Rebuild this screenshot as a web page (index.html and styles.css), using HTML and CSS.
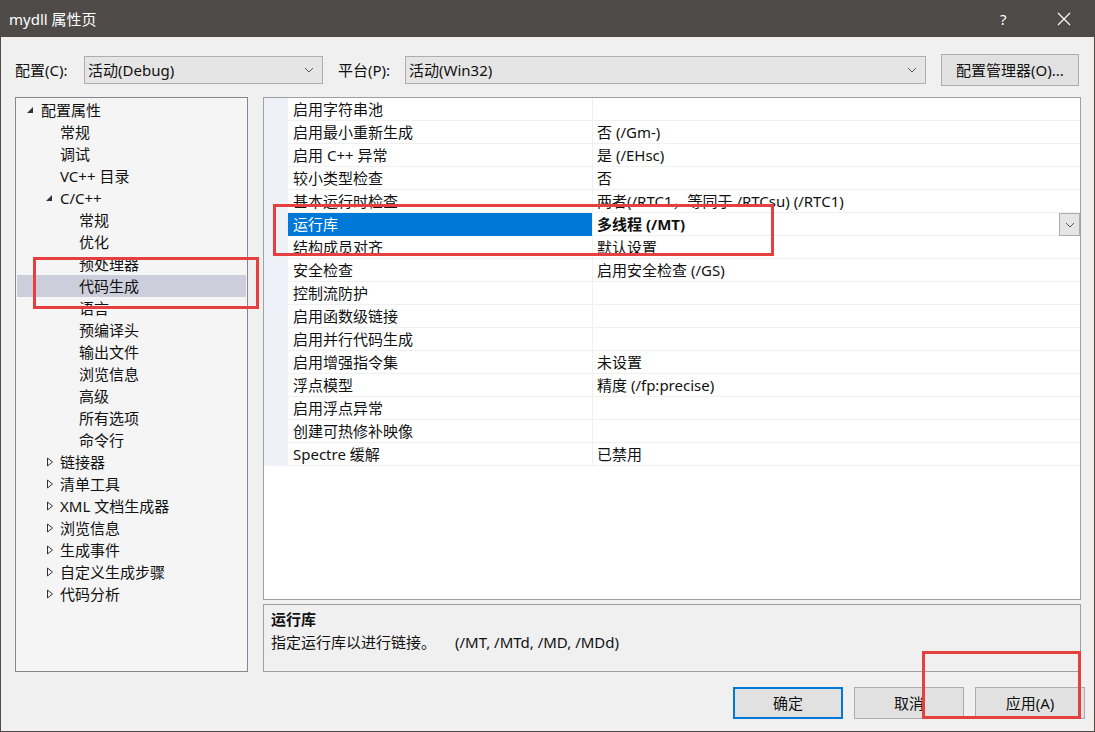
FILE: index.html
```html
<!DOCTYPE html>
<html>
<head>
<meta charset="utf-8">
<link rel="stylesheet" href="styles.css">
</head>
<body>
<div class="window">
  <div class="titlebar">
    <span class="title">mydll 属性页</span>
    <span class="help">?</span>
    <span class="close"><svg width="14" height="14" viewBox="0 0 14 14"><path d="M1 1L13 13M13 1L1 13" stroke="#fff" stroke-width="1.2" fill="none"/></svg></span>
  </div>
  <div class="body">
    <div class="toprow">
      <span class="lbl l1">配置(C):</span>
      <div class="combo c1"><span>活动(Debug)</span><svg class="chev" width="10" height="6" viewBox="0 0 10 6"><path d="M1 1L5 5L9 1" stroke="#555" stroke-width="1" fill="none"/></svg></div>
      <span class="lbl l2">平台(P):</span>
      <div class="combo c2"><span>活动(Win32)</span><svg class="chev" width="10" height="6" viewBox="0 0 10 6"><path d="M1 1L5 5L9 1" stroke="#555" stroke-width="1" fill="none"/></svg></div>
      <div class="btn mgr">配置管理器(O)...</div>
    </div>
    <div class="main">
      <div class="tree">
        <div class="node lv0"><svg class="tri" width="8" height="8" viewBox="0 0 8 8"><path d="M7 1L7 7L1 7Z" fill="#333"/></svg>配置属性</div>
        <div class="node lv1">常规</div>
        <div class="node lv1">调试</div>
        <div class="node lv1">VC++ 目录</div>
        <div class="node lv1 exp"><svg class="tri" width="8" height="8" viewBox="0 0 8 8"><path d="M7 1L7 7L1 7Z" fill="#333"/></svg>C/C++</div>
        <div class="node lv2">常规</div>
        <div class="node lv2">优化</div>
        <div class="node lv2">预处理器</div>
        <div class="node lv2 sel">代码生成</div>
        <div class="node lv2">语言</div>
        <div class="node lv2">预编译头</div>
        <div class="node lv2">输出文件</div>
        <div class="node lv2">浏览信息</div>
        <div class="node lv2">高级</div>
        <div class="node lv2">所有选项</div>
        <div class="node lv2">命令行</div>
        <div class="node lv1 col"><svg class="tri" width="8" height="10" viewBox="0 0 8 10"><path d="M1.5 1L6.5 5L1.5 9Z" stroke="#333" stroke-width="1" fill="none"/></svg>链接器</div>
        <div class="node lv1 col"><svg class="tri" width="8" height="10" viewBox="0 0 8 10"><path d="M1.5 1L6.5 5L1.5 9Z" stroke="#333" stroke-width="1" fill="none"/></svg>清单工具</div>
        <div class="node lv1 col"><svg class="tri" width="8" height="10" viewBox="0 0 8 10"><path d="M1.5 1L6.5 5L1.5 9Z" stroke="#333" stroke-width="1" fill="none"/></svg>XML 文档生成器</div>
        <div class="node lv1 col"><svg class="tri" width="8" height="10" viewBox="0 0 8 10"><path d="M1.5 1L6.5 5L1.5 9Z" stroke="#333" stroke-width="1" fill="none"/></svg>浏览信息</div>
        <div class="node lv1 col"><svg class="tri" width="8" height="10" viewBox="0 0 8 10"><path d="M1.5 1L6.5 5L1.5 9Z" stroke="#333" stroke-width="1" fill="none"/></svg>生成事件</div>
        <div class="node lv1 col"><svg class="tri" width="8" height="10" viewBox="0 0 8 10"><path d="M1.5 1L6.5 5L1.5 9Z" stroke="#333" stroke-width="1" fill="none"/></svg>自定义生成步骤</div>
        <div class="node lv1 col"><svg class="tri" width="8" height="10" viewBox="0 0 8 10"><path d="M1.5 1L6.5 5L1.5 9Z" stroke="#333" stroke-width="1" fill="none"/></svg>代码分析</div>
      </div>
      <div class="right">
        <div class="grid">
          <div class="row"><div class="strip"></div><div class="name">启用字符串池</div><div class="val"></div></div>
          <div class="row"><div class="strip"></div><div class="name">启用最小重新生成</div><div class="val">否 (/Gm-)</div></div>
          <div class="row"><div class="strip"></div><div class="name">启用 C++ 异常</div><div class="val">是 (/EHsc)</div></div>
          <div class="row"><div class="strip"></div><div class="name">较小类型检查</div><div class="val">否</div></div>
          <div class="row"><div class="strip"></div><div class="name">基本运行时检查</div><div class="val">两者(/RTC1，等同于 /RTCsu) (/RTC1)</div></div>
          <div class="row selrow"><div class="strip"></div><div class="name">运行库</div><div class="val"><b>多线程 (/MT)</b><div class="dd"><svg width="10" height="6" viewBox="0 0 10 6"><path d="M1 1L5 5L9 1" stroke="#555" stroke-width="1" fill="none"/></svg></div></div></div>
          <div class="row"><div class="strip"></div><div class="name">结构成员对齐</div><div class="val">默认设置</div></div>
          <div class="row"><div class="strip"></div><div class="name">安全检查</div><div class="val">启用安全检查 (/GS)</div></div>
          <div class="row"><div class="strip"></div><div class="name">控制流防护</div><div class="val"></div></div>
          <div class="row"><div class="strip"></div><div class="name">启用函数级链接</div><div class="val"></div></div>
          <div class="row"><div class="strip"></div><div class="name">启用并行代码生成</div><div class="val"></div></div>
          <div class="row"><div class="strip"></div><div class="name">启用增强指令集</div><div class="val">未设置</div></div>
          <div class="row"><div class="strip"></div><div class="name">浮点模型</div><div class="val">精度 (/fp:precise)</div></div>
          <div class="row"><div class="strip"></div><div class="name">启用浮点异常</div><div class="val"></div></div>
          <div class="row"><div class="strip"></div><div class="name">创建可热修补映像</div><div class="val"></div></div>
          <div class="row"><div class="strip"></div><div class="name">Spectre 缓解</div><div class="val">已禁用</div></div>
        </div>
        <div class="desc">
          <div class="dtitle">运行库</div>
          <div class="dtext">指定运行库以进行链接。<span class="opts">(/MT, /MTd, /MD, /MDd)</span></div>
        </div>
      </div>
    </div>
    <div class="buttons">
      <div class="btn ok">确定</div>
      <div class="btn">取消</div>
      <div class="btn">应用(A)</div>
    </div>
  </div>
  <div class="anno a1"></div>
  <div class="anno a2"></div>
  <div class="anno a3"></div>
</div>
</body>
</html>
```
FILE: styles.css
```css
* { box-sizing: border-box; }
html, body { margin: 0; padding: 0; }
body {
  width: 1095px;
  height: 732px;
  overflow: hidden;
  font-family: "Noto Sans", "Noto Sans CJK SC", sans-serif;
  font-size: 15px;
  color: #111;
  background: #f0f0f0;
}
.window {
  position: relative;
  width: 1095px;
  height: 732px;
  background: #f0f0f0;
  border: 1px solid #4d4a48;
  border-top: none;
  display: flex;
  flex-direction: column;
}
.titlebar {
  height: 37px;
  background: #4d4a48;
  color: #fff;
  display: flex;
  align-items: center;
  padding-left: 9px;
  margin: 0 -1px;
  flex-shrink: 0;
}
.title { font-size: 15px; line-height: 20px; flex: 1; }
.help { font-size: 15px; width: 14px; margin-right: 43px; line-height: 20px; }
.close { width: 14px; height: 14px; margin-right: 24px; display: flex; }
.body {
  padding-left: 14px;
  display: flex;
  flex-direction: column;
  flex: 1;
}
.toprow {
  margin-top: 17px;
  height: 32px;
  display: flex;
  align-items: center;
}
.lbl { line-height: 20px; }
.l1 { width: 69px; }
.l2 { width: 67px; margin-left: 15px; }
.combo {
  height: 28px;
  background: #e5e5e5;
  border: 1px solid #adadad;
  display: flex;
  align-items: center;
  justify-content: space-between;
  padding: 0 8px 0 3px;
  line-height: 20px;
}
.c1 { width: 239px; }
.c2 { width: 521px; }
.btn {
  height: 32px;
  background: #e1e1e1;
  border: 1px solid #adadad;
  display: flex;
  align-items: center;
  justify-content: center;
  line-height: 20px;
}
.mgr { width: 138px; margin-left: 15px; }
.main {
  margin-top: 11px;
  height: 575px;
  display: flex;
  gap: 15px;
}
.tree {
  width: 233px;
  height: 575px;
  border: 1px solid #828790;
  background: #f5f5f5;
  padding: 1px 1px 0 1px;
}
.node {
  height: 22px;
  display: flex;
  align-items: center;
  position: relative;
  line-height: 20px;
  white-space: nowrap;
}
.lv0 { padding-left: 24px; }
.lv1 { padding-left: 43px; }
.lv2 { padding-left: 62px; }
.tri { position: absolute; }
.lv0 .tri { left: 9px; top: 7px; }
.lv1.exp .tri { left: 28px; top: 7px; }
.lv1.col .tri { left: 29px; top: 6px; }
.sel { background: #cccedb; }
.right {
  width: 818px;
  display: flex;
  flex-direction: column;
  gap: 4px;
}
.grid {
  height: 503px;
  border: 1px solid #a0a0a0;
  background: #fff;
}
.row {
  height: 23px;
  display: flex;
}
.strip { width: 24px; background: #eef2f8; }
.name {
  width: 304px;
  padding-left: 5px;
  display: flex;
  align-items: center;
  border-bottom: 1px solid #f0f0f0;
  line-height: 20px;
  white-space: nowrap;
}
.val {
  flex: 1;
  padding-left: 4px;
  display: flex;
  align-items: center;
  border-left: 1px solid #f0f0f0;
  border-bottom: 1px solid #f0f0f0;
  line-height: 20px;
  white-space: nowrap;
  position: relative;
}
.selrow .name { background: #0078d7; color: #fff; border-bottom-color: #0078d7; }
.selrow .val b { font-weight: 700; }
.dd {
  position: absolute;
  right: 0;
  top: 0;
  width: 21px;
  height: 23px;
  background: #e5e5e5;
  border: 1px solid #adadad;
  display: flex;
  align-items: center;
  justify-content: center;
}
.desc {
  height: 68px;
  border: 1px solid #a0a0a0;
  background: #f0f0f0;
  padding: 2px 0 0 7px;
}
.dtitle { font-weight: 700; height: 23px; line-height: 20px; display: flex; align-items: center; }
.dtext { height: 23px; line-height: 20px; display: flex; align-items: center; }
.opts { margin-left: 19px; }
.buttons {
  margin-top: 15px;
  display: flex;
  justify-content: flex-end;
  gap: 11px;
  padding-right: 9px;
}
.buttons .btn { width: 110px; }
.btn.ok { border: 2px solid #0078d7; }
.anno {
  position: absolute;
  border: 3px solid #e5403f;
}
.a1 { left: 32px; top: 257px; width: 226px; height: 52px; }
.a2 { left: 272px; top: 204px; width: 501px; height: 52px; }
.a3 { left: 921px; top: 651px; width: 159px; height: 68px; }
```
